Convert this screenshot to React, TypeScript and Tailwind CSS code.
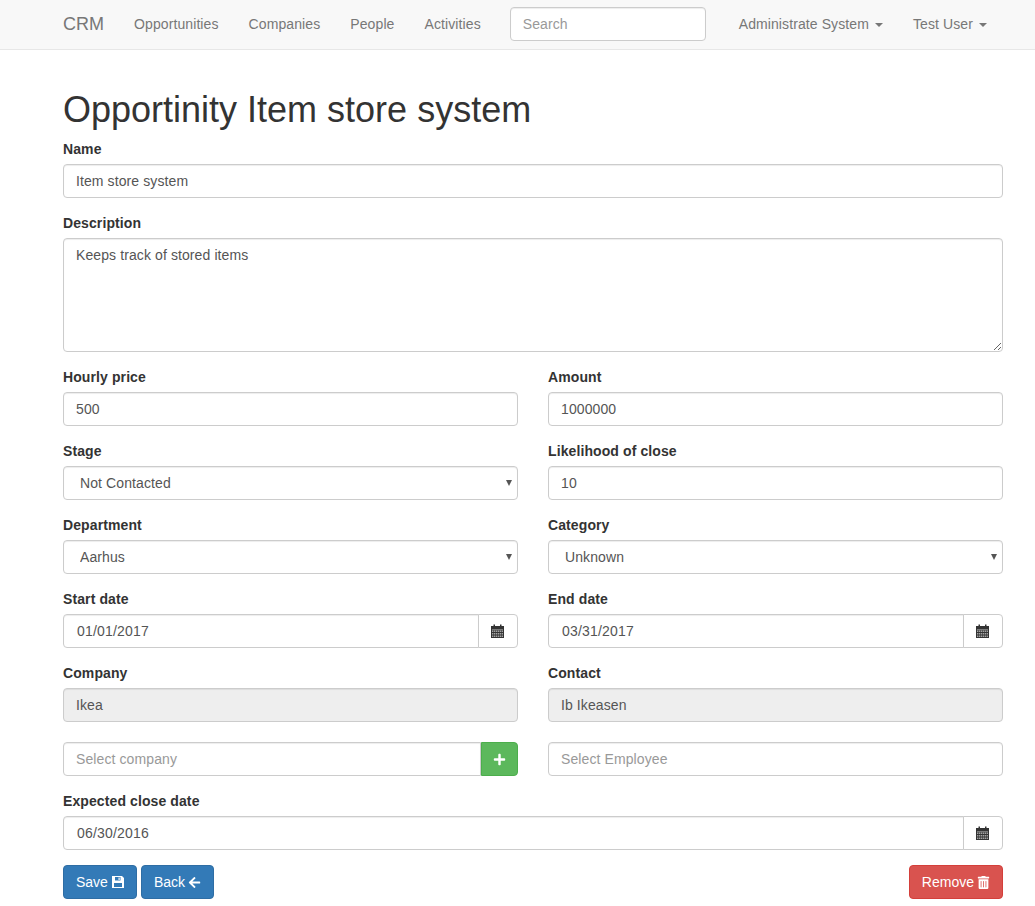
import { ReactNode } from 'react';
import { FaArrowLeft, FaPlus, FaTrashAlt } from 'react-icons/fa';

const fieldBase =
  'h-[34px] rounded-[4px] border border-[#ccc] px-3 text-[14px] leading-5 tracking-[0.1px] text-[#555] shadow-[inset_0_1px_1px_rgba(0,0,0,0.075)] outline-none placeholder:text-[#999]';
const inputClass = `${fieldBase} w-full bg-white`;

function Caret() {
  return <span className="ml-[6px] inline-block h-0 w-0 border-x-4 border-t-4 border-x-transparent border-t-[#777] align-middle" />;
}

function NavLink({ children }: { children: ReactNode }) {
  return (
    <a href="#" className="whitespace-nowrap px-[15px] text-[14px] leading-5 tracking-[0.1px] text-[#777]">
      {children}
    </a>
  );
}

function Navbar() {
  return (
    <nav className="flex h-[50px] items-center border-b border-[#e7e7e7] bg-[#f8f8f8] pb-px pl-[48px] pr-[33px]">
      <a href="#" className="px-[15px] text-[18px] leading-5 text-[#777]">
        CRM
      </a>
      <div className="flex items-center">
        <NavLink>Opportunities</NavLink>
        <NavLink>Companies</NavLink>
        <NavLink>People</NavLink>
        <NavLink>Activities</NavLink>
      </div>
      <input placeholder="Search" className={`${fieldBase} ml-[14px] w-[196px] shrink-0 bg-white`} />
      <div className="ml-auto flex items-center">
        <NavLink>
          Administrate System
          <Caret />
        </NavLink>
        <NavLink>
          Test User
          <Caret />
        </NavLink>
      </div>
    </nav>
  );
}

function Field({ label, children }: { label: string; children: ReactNode }) {
  return (
    <div className="min-w-0">
      <label className="mb-[5px] block text-[14px] font-bold leading-5 tracking-[0.1px] text-[#333]">{label}</label>
      {children}
    </div>
  );
}

function SelectInput({ value }: { value: string }) {
  return (
    <div className="relative">
      <select defaultValue={value} className={`${inputClass} appearance-none pl-4`}>
        <option>{value}</option>
      </select>
      <svg viewBox="0 0 8 6" className="pointer-events-none absolute right-[5px] top-[14px] h-[6px] w-[8px] fill-[#555]">
        <path d="M1 0h6L4 6z" />
      </svg>
    </div>
  );
}

function CalendarIcon() {
  return (
    <svg viewBox="0 0 13 14" className="h-[14px] w-[13px]">
      <path fill="#333" d="M0 2h2.5V0.5h1.5V2h5V0.5h1.5V2H13v12H0z" />
      <path fill="#fff" d="M1 5.5h11v0.6H1z" opacity="0.7" />
      <path
        fill="#fff"
        opacity="0.55"
        d="M1 6.5h1.4v1.5H1zM3 6.5h1.4v1.5H3zM5 6.5h1.4v1.5H5zM7 6.5h1.4v1.5H7zM9 6.5h1.4v1.5H9zM11 6.5h1v1.5h-1zM1 9h1.4v1.5H1zM3 9h1.4v1.5H3zM5 9h1.4v1.5H5zM7 9h1.4v1.5H7zM9 9h1.4v1.5H9zM11 9h1v1.5h-1zM1 11.5h1.4V13H1zM3 11.5h1.4V13H3zM5 11.5h1.4V13H5zM7 11.5h1.4V13H7zM9 11.5h1.4V13H9zM11 11.5h1V13h-1z"
      />
    </svg>
  );
}

function SaveIcon() {
  return (
    <svg viewBox="0 0 13 12" className="h-[12px] w-[13px]">
      <path
        fill="#fff"
        fillRule="evenodd"
        d="M1 0h10l2 2v10H1zM4 1v3.5h5.5V1zM3 7v4h8V7zM7.5 1.5h1.2v2.5H7.5z"
      />
    </svg>
  );
}

function DateInput({ value }: { value: string }) {
  return (
    <div className="flex">
      <input defaultValue={value} className={`${fieldBase} w-full min-w-0 flex-1 rounded-r-none bg-white pl-[13px] tracking-[0.2px]`} />
      <span className="-ml-px flex h-[34px] w-[40px] shrink-0 items-center justify-center rounded-r-[4px] border border-[#ccc] bg-white pr-px">
        <CalendarIcon />
      </span>
    </div>
  );
}

function ActionButton({ color, children }: { color: string; children: ReactNode }) {
  return (
    <button type="button" className={`flex h-[34px] items-center gap-[3px] rounded-[4px] border px-3 text-[14px] leading-5 text-white ${color}`}>
      {children}
    </button>
  );
}

export default function App() {
  return (
    <div className="min-h-[906px] bg-white font-['Liberation_Sans',Arial,sans-serif] text-[14px] text-[#333]">
      <Navbar />
      <main className="pl-[63px] pr-[32px]">
        <h1 className="mb-[9px] mt-[40px] text-[36px] font-normal leading-10 text-[#333]">Opportinity Item store system</h1>
        <div className="flex flex-col gap-[15px]">
          <Field label="Name">
            <input defaultValue="Item store system" className={inputClass} />
          </Field>
          <Field label="Description">
            <textarea
              defaultValue="Keeps track of stored items"
              className={`${inputClass} block h-[114px] resize-y py-[6px]`}
            />
          </Field>
          <div className="grid grid-cols-2 gap-x-[30px] gap-y-[15px]">
            <Field label="Hourly price">
              <input defaultValue="500" className={inputClass} />
            </Field>
            <Field label="Amount">
              <input defaultValue="1000000" className={inputClass} />
            </Field>
            <Field label="Stage">
              <SelectInput value="Not Contacted" />
            </Field>
            <Field label="Likelihood of close">
              <input defaultValue="10" className={inputClass} />
            </Field>
            <Field label="Department">
              <SelectInput value="Aarhus" />
            </Field>
            <Field label="Category">
              <SelectInput value="Unknown" />
            </Field>
            <Field label="Start date">
              <DateInput value="01/01/2017" />
            </Field>
            <Field label="End date">
              <DateInput value="03/31/2017" />
            </Field>
            <Field label="Company">
              <input disabled defaultValue="Ikea" className={`${fieldBase} w-full bg-[#eee]`} />
            </Field>
            <Field label="Contact">
              <input disabled defaultValue="Ib Ikeasen" className={`${fieldBase} w-full bg-[#eee]`} />
            </Field>
          </div>
          <div className="mt-[5px] grid grid-cols-2 gap-x-[30px]">
            <div className="flex">
              <input placeholder="Select company" className={`${inputClass} min-w-0 flex-1 rounded-r-none`} />
              <button
                type="button"
                className="flex h-[34px] w-[37px] shrink-0 items-center justify-center rounded-r-[4px] border border-[#4cae4c] bg-[#5cb85c] text-white"
              >
                <FaPlus size={13} />
              </button>
            </div>
            <input placeholder="Select Employee" className={inputClass} />
          </div>
          <Field label="Expected close date">
            <DateInput value="06/30/2016" />
          </Field>
          <div className="flex items-center gap-1">
            <ActionButton color="border-[#2e6da4] bg-[#337ab7]">
              Save
              <SaveIcon />
            </ActionButton>
            <ActionButton color="border-[#2e6da4] bg-[#337ab7]">
              Back
              <FaArrowLeft size={13} />
            </ActionButton>
            <div className="ml-auto">
              <ActionButton color="border-[#d43f3a] bg-[#d9534f]">
                Remove
                <FaTrashAlt size={13} />
              </ActionButton>
            </div>
          </div>
        </div>
      </main>
    </div>
  );
}
